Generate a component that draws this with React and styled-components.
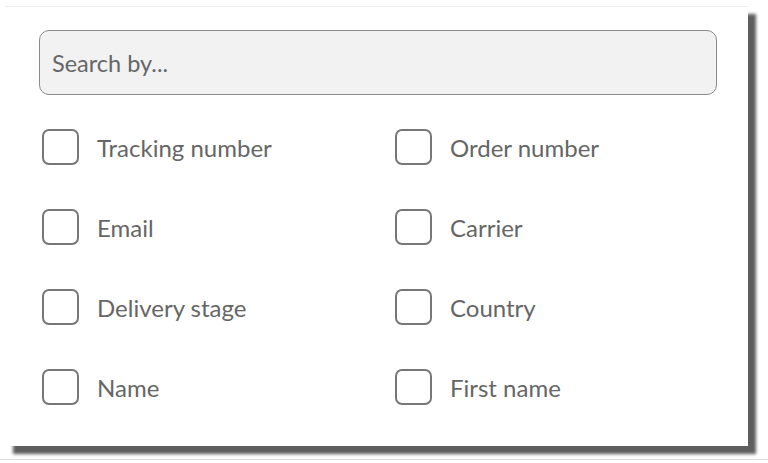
import React from "react";
import styled, { createGlobalStyle } from "styled-components";

const Global = createGlobalStyle`
  html, body { margin: 0; padding: 0; background: #fff; }
  body { font-family: Lato, "Noto Sans", sans-serif; }
`;

const Page = styled.div`
  height: 460px;
  border-bottom: 1px solid #dcdcdc;
  padding: 6px 0 0 5px;
  box-sizing: border-box;
`;

const Card = styled.div`
  width: 743px;
  height: 440px;
  background: #fff;
  border-top: 1px solid #eeeeee;
  box-sizing: border-box;
  box-shadow: 8px 8px 3px rgba(40, 40, 40, 0.75);
  padding: 23px 31px 0 34px;
`;

const Search = styled.input`
  display: block;
  width: 678px;
  height: 65px;
  box-sizing: border-box;
  background: #f2f2f2;
  border: 1px solid #8a8a8a;
  border-radius: 10px;
  padding: 0 12px;
  font-family: Lato, "Noto Sans", sans-serif;
  font-size: 23.5px;
  color: #555;
  outline: none;
  &::placeholder { color: #666; }
`;

const Grid = styled.div`
  display: grid;
  grid-template-columns: 353px 1fr;
  grid-auto-rows: 80px;
  margin-top: 12px;
  padding-left: 3px;
`;

const Option = styled.label`
  display: flex;
  align-items: center;
  gap: 18px;
  cursor: pointer;
`;

const Box = styled.input.attrs({ type: "checkbox" })`
  appearance: none;
  margin: 0;
  width: 37px;
  height: 36px;
  box-sizing: border-box;
  border: 2px solid #777;
  border-radius: 7px;
  background: #fff;
  flex: none;
`;

const Text = styled.span`
  font-size: 24px;
  color: #666;
`;

const options = [
  "Tracking number",
  "Order number",
  "Email",
  "Carrier",
  "Delivery stage",
  "Country",
  "Name",
  "First name",
];

export default function App() {
  return (
    <>
      <Global />
      <Page>
        <Card>
          <Search placeholder="Search by..." />
          <Grid>
            {options.map((o) => (
              <Option key={o}>
                <Box />
                <Text>{o}</Text>
              </Option>
            ))}
          </Grid>
        </Card>
      </Page>
    </>
  );
}
